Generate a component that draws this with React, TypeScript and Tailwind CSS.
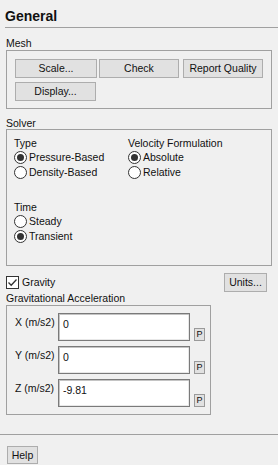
import React from "react";

const Btn = ({ children, w, h = "h-[19px]" }: { children: React.ReactNode; w: string; h?: string }) => (
  <div className={`${w} ${h} flex items-center justify-center bg-[#e1e1e1] border border-[#adadad] leading-none whitespace-nowrap`}>
    {children}
  </div>
);

const Radio = ({ checked, label }: { checked?: boolean; label: string }) => (
  <div className="h-[15px] flex items-center">
    <div className="w-[13px] h-[13px] rounded-full border border-[#333333] bg-white flex items-center justify-center">
      {checked && <div className="w-[7px] h-[7px] rounded-full bg-[#333333]" />}
    </div>
    <span className="ml-[2px] leading-none whitespace-nowrap">{label}</span>
  </div>
);

const Field = ({ label, value }: { label: string; value: string }) => (
  <div className="flex h-[28px]">
    <div className="w-[44px] pt-[2px] leading-[14px] pl-[1px] whitespace-nowrap">{label}</div>
    <div className="w-[132px] h-[28px] bg-white border border-[#7a7a7a] shadow-[inset_1px_1px_0_#c4c4c4,inset_-1px_-1px_0_#e8e8e8] pl-[4px] pt-[3px] leading-[14px]">
      {value}
    </div>
    <div className="ml-[4px] self-end w-[11px] h-[13px] bg-[#e1e1e1] border border-[#9a9a9a] text-[9px] leading-none flex items-center justify-center">
      P
    </div>
  </div>
);

export default function App() {
  return (
    <div className="w-[278px] h-[465px] bg-[#f0f0f0] text-[#111111] text-[10.5px] overflow-hidden font-['Liberation_Sans',sans-serif]">
      <div className="h-[27px] pl-[5px] pt-[7px] leading-[18px] text-[14px] font-bold">General</div>
      <div className="h-px bg-[#a0a0a0] ml-[5px]" />
      <div className="mt-[9px] pl-[6px] leading-[13px]">Mesh</div>
      <div className="ml-[6px] w-[266px] h-[59px] border border-[#a0a0a0] pl-[8px] pt-[8px]">
        <div className="flex">
          <Btn w="w-[82px]">Scale...</Btn>
          <div className="w-[2px]" />
          <Btn w="w-[80px]">Check</Btn>
          <div className="w-[4px]" />
          <Btn w="w-[80px]">Report Quality</Btn>
        </div>
        <div className="mt-[4px] flex">
          <Btn w="w-[81px]">Display...</Btn>
        </div>
      </div>
      <div className="mt-[8px] pl-[6px] leading-[12px]">Solver</div>
      <div className="ml-[6px] w-[266px] h-[137px] border border-[#a0a0a0] pl-[7px] pt-[6px] flex">
        <div className="w-[114px]">
          <div className="leading-[14px]">Type</div>
          <Radio checked label="Pressure-Based" />
          <Radio label="Density-Based" />
          <div className="mt-[20px] leading-[14px]">Time</div>
          <Radio label="Steady" />
          <Radio checked label="Transient" />
        </div>
        <div>
          <div className="leading-[14px]">Velocity Formulation</div>
          <Radio checked label="Absolute" />
          <Radio label="Relative" />
        </div>
      </div>
      <div className="mt-[7px] flex items-center justify-between pl-[6px] pr-[11px] h-[19px]">
        <div className="flex items-center">
          <div className="w-[13px] h-[13px] border border-[#333333] bg-white flex items-center justify-center">
            <svg width="11" height="11" viewBox="0 0 11 11">
              <path d="M1.5 5.5 L4.2 8.3 L9.5 2.5" fill="none" stroke="#333333" strokeWidth="1.3" />
            </svg>
          </div>
          <span className="ml-[3px] leading-none">Gravity</span>
        </div>
        <Btn w="w-[43px]">Units...</Btn>
      </div>
      <div className="pl-[6px] leading-[13px]">Gravitational Acceleration</div>
      <div className="ml-[6px] w-[205px] h-[110px] border border-[#a0a0a0] pl-[7px] pt-[7px] flex flex-col gap-[5px]">
        <Field label="X (m/s2)" value="0" />
        <Field label="Y (m/s2)" value="0" />
        <Field label="Z (m/s2)" value="-9.81" />
      </div>
      <div className="mt-[19px] h-px bg-[#a0a0a0]" />
      <div className="mt-[11px] pl-[7px]">
        <Btn w="w-[31px]" h="h-[18px]">Help</Btn>
      </div>
    </div>
  );
}
